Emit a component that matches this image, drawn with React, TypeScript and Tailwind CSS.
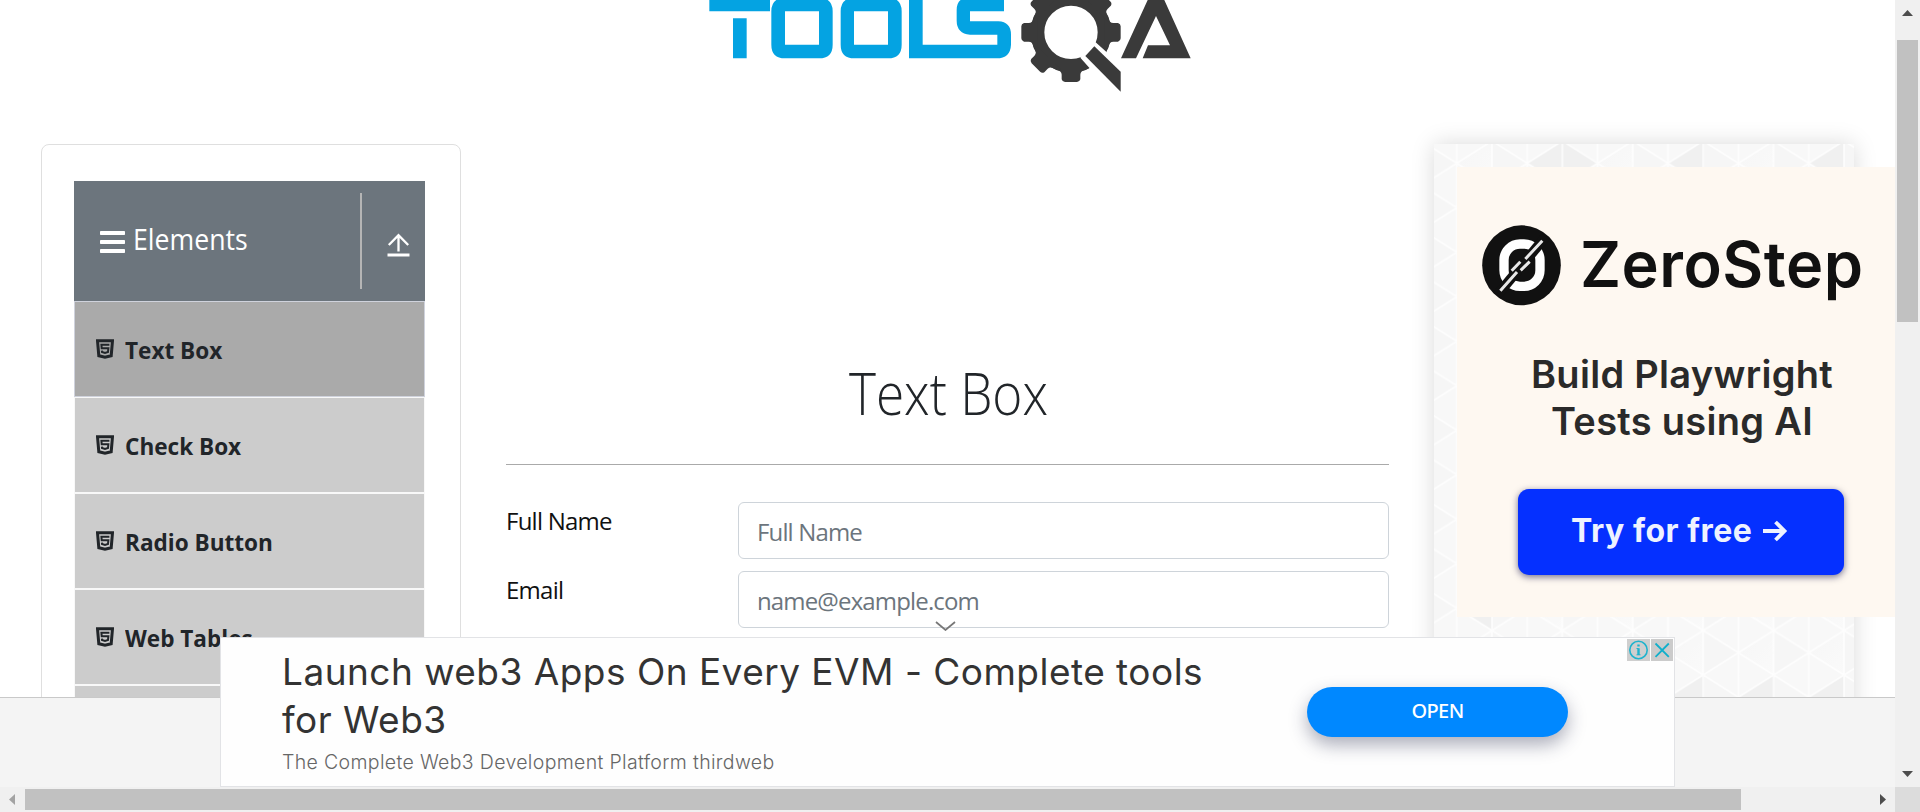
import React from "react";

function ToolsQaLogo() {
  return (
    <svg className="ml-[690px] block h-[110px] w-[520px]" viewBox="0 0 1560 330" aria-label="TOOLSQA">
      <g fill="#04a3e2" fillRule="evenodd">
        <path d="M58 -20H240V34H58ZM129 55H170V175H129Z" />
        <path d="M283 -7H389Q428 -5 428 34V134Q428 175 387 175H285Q244 175 244 134V34Q244 -5 283 -7ZM285 34V134H387V34Z" />
        <path d="M491 -7H597Q635 -5 635 34V134Q635 175 594 175H493Q452 175 452 134V34Q452 -5 491 -7ZM492 34V134H594V34Z" />
        <path d="M657 -20H698V134H922V104H840Q800 100 800 62V30Q800 -8 840 -8H942V34H840V64H925Q963 66 963 104V134Q961 175 920 175H657Z" />
      </g>
      <g fill="#3a3a3a">
        <circle cx="1143" cy="97" r="100.5" fill="none" stroke="#3a3a3a" strokeWidth="41" />
        {[0, 45, 90, 135, 180, 225, 315].map((a) => (
          <path
            key={a}
            transform={`rotate(${a} 1143 97)`}
            d="M1244 40L1255 53Q1258 69 1270 69H1284Q1292 71 1292 79V115Q1292 123 1284 125H1270Q1258 125 1255 141L1244 154Z"
          />
        ))}
        <path fill="#fff" d="M1216 126L1262 167L1330 220V320L1250 262L1171 173Z" />
        <path d="M1213 139L1292 215V275L1186 168Z" />
        <path d="M1293 175L1374 -2Q1380 -14 1398 -14Q1416 -14 1422 -2L1502 175H1358L1374 136H1440L1398 48L1338 175Z" />
      </g>
    </svg>
  );
}

function Html5Icon() {
  return (
    <svg className="h-5 w-[18px] shrink-0" viewBox="0 0 18 20" fill="none" stroke="#212529">
      <path strokeWidth="3" d="M1.5 1.7H16.5L15.2 16.7L9 18.3L2.8 16.7Z" />
      <path strokeWidth="2" d="M13.4 5.8H5.4L5.7 9.2H12.4L12 13L9 14L6 13L5.9 11.7" />
    </svg>
  );
}

function MenuItem({ label, active = false }: { label?: string; active?: boolean }) {
  return (
    <li
      className={
        active
          ? "flex h-24 shrink-0 items-center border border-[#cfd2dc] bg-[#aaaaaa] pl-[21px]"
          : "flex h-24 shrink-0 items-center border border-[#f8f8f8] bg-[#cccccc] pl-[21px]"
      }
    >
      <Html5Icon />
      <span className="ml-[10.5px] origin-left scale-x-[0.94] pt-px text-2xl font-bold whitespace-nowrap">{label}</span>
    </li>
  );
}

function Sidebar() {
  return (
    <aside className="h-[700px] w-[420px] shrink-0 rounded-t-lg border border-[#dfdfdf] px-8 pt-9">
      <div className="flex h-[120px] w-[351px] items-center bg-[#6c757d] text-white">
        <svg className="ml-[26px] h-6 w-[25px] translate-y-px" viewBox="0 0 25 24" fill="#fff">
          <rect y="1" width="25" height="4" rx="0.7" />
          <rect y="10" width="25" height="4" rx="0.7" />
          <rect y="19" width="25" height="4" rx="0.7" />
        </svg>
        <span className="ml-2 w-[153px] origin-left scale-x-[0.92] pb-[5px] text-[29px] leading-none">Elements</span>
        <div className="ml-auto h-24 w-[2px] bg-[#b5b5b5]" />
        <svg className="mr-[15px] ml-[25px] h-6 w-[23px] translate-y-1" viewBox="0 0 23 24" fill="none" stroke="#fff">
          <path strokeWidth="2.3" d="M11.5 18.5V2M1.8 12L11.5 2.2L21.2 12" />
          <path strokeWidth="3" d="M.5 22H22.5" />
        </svg>
      </div>
      <ul className="flex w-[351px] flex-col">
        <MenuItem label="Text Box" active />
        <MenuItem label="Check Box" />
        <MenuItem label="Radio Button" />
        <MenuItem label="Web Tables" />
        <MenuItem />
      </ul>
    </aside>
  );
}

function Field({ label, placeholder }: { label: string; placeholder: string }) {
  return (
    <div className="flex h-[57px] items-start text-2xl">
      <label className="w-[232px] pt-px leading-9 tracking-[-0.75px] text-[#111]">{label}</label>
      <input
        className="h-[57px] w-[651px] rounded-md border border-[#ced4da] bg-white pt-px pl-[18px] tracking-[-0.85px] placeholder:text-[#6c757d] placeholder:opacity-100"
        placeholder={placeholder}
      />
    </div>
  );
}

function TextBoxForm() {
  return (
    <main className="ml-[45px] w-[883px] shrink-0 pt-[212px]">
      <h1 className="translate-x-px scale-x-[0.87] text-center text-[59px] leading-[72px] font-light">Text Box</h1>
      <hr className="mt-9 border-0 border-t border-t-[#aaa]" />
      <form className="mt-[37px] flex flex-col gap-3">
        <Field label="Full Name" placeholder="Full Name" />
        <Field label="Email" placeholder="name@example.com" />
      </form>
    </main>
  );
}

const DARK_TRIANGLES = [
  "94,19 129,-3 129,41",
  "129,-3 164,19 129,41",
  "234,19 270,-3 270,41",
  "375,19 410,-3 410,41",
  "23,464 58,442 58,486",
  "305,553 340,531 340,575",
  "234,553 270,531 270,575",
  "375,553 410,531 410,575",
];

function TriangleBackdrop() {
  return (
    <svg className="absolute inset-0 h-full w-full">
      <defs>
        <linearGradient id="facet" x2="1" y2="1">
          <stop offset="0" stopColor="#f6f6f6" />
          <stop offset="1" stopColor="#fafafa" />
        </linearGradient>
        <pattern id="tri" x="58" y="-3" width="70.4" height="44.5" patternUnits="userSpaceOnUse">
          <path fill="#f6f6f6" d="M0 0L35.2 22.25L0 44.5Z" />
          <path fill="url(#facet)" d="M35.2 22.25L70.4 0V44.5Z" />
        </pattern>
        <pattern id="lines" x="58" y="-3" width="70.4" height="44.5" patternUnits="userSpaceOnUse">
          <path
            fill="none"
            stroke="#fff"
            strokeWidth="1.6"
            strokeOpacity="0.8"
            d="M0 0V44.5M70.4 0V44.5M35.2 0V44.5M0 0L70.4 44.5M0 44.5L70.4 0"
          />
        </pattern>
      </defs>
      <rect width="100%" height="100%" fill="#f8f8f8" />
      <rect width="100%" height="100%" fill="url(#tri)" />
      {DARK_TRIANGLES.map((p) => (
        <polygon key={p} points={p} fill="#f0f0f0" />
      ))}
      <rect width="100%" height="100%" fill="url(#lines)" />
    </svg>
  );
}

function ZeroStepMark() {
  return (
    <svg className="h-[81px] w-[79px] translate-y-px" viewBox="187 283 237 243">
      <ellipse cx="305.5" cy="404" rx="118" ry="120" fill="#111" />
      <rect x="253" y="340" width="108" height="127" rx="48" fill="none" stroke="#fff" strokeWidth="28" />
      <path stroke="#111" strokeWidth="30" d="M378 318L232 494" />
      <path stroke="#e8e8e8" strokeWidth="9" d="M368 330L317 385M302 393L276 420M330 393L303 419M292 424L242 480" />
    </svg>
  );
}

function SideAd() {
  return (
    <aside className="relative ml-[45px] h-[700px] w-[420px] shrink-0 pt-[23px] pl-[23px] shadow-[0_0_22px_rgba(0,0,0,0.15)]">
      <TriangleBackdrop />
      <div className="relative flex h-[450px] w-[450px] flex-col items-center bg-[#fef8f1] pt-[57px] font-[Inter,sans-serif] text-[#111]">
        <div className="flex h-20 w-full items-center pl-[25px]">
          <ZeroStepMark />
          <span className="ml-[19px] text-[63px] leading-[80px] font-semibold tracking-[0.5px]">ZeroStep</span>
        </div>
        <p className="mt-[47px] text-center text-[38px] leading-[47px] font-semibold tracking-[0.3px] text-[#2a2a2a]">
          Build Playwright
          <br />
          Tests using AI
        </p>
        <button className="mt-11 -ml-0.5 flex h-[86px] w-[326px] shrink-0 items-center rounded-[11px] bg-[#0530ff] pb-[3px] pl-[53px] text-[32px] font-bold tracking-[0.5px] text-[#eef2ff] shadow-[0_2px_7px_rgba(0,0,60,0.55)]">
          Try for free
          <svg className="ml-[10px] h-6 w-[26px]" viewBox="0 0 26 24" fill="none" stroke="#eef2ff" strokeWidth="3.8">
            <path d="M1 12H23M13.5 3L22.5 12L13.5 21" />
          </svg>
        </button>
      </div>
    </aside>
  );
}

function BannerAd() {
  return (
    <section className="absolute top-[637px] left-[220px] flex h-[150px] w-[1455px] border border-[#e2e3e6] bg-[#fefefe] font-[Inter,sans-serif]">
      <div className="w-[1086px] pt-[10px] pl-[61px]">
        <h2 className="text-[37px] leading-[48px] tracking-[0.48px] text-[#333]">
          Launch web3 Apps On Every EVM - Complete tools
          <br />
          for Web3
        </h2>
        <p className="mt-1 text-[19.5px] leading-7 font-light tracking-[0.34px] text-[#666]">
          The Complete Web3 Development Platform thirdweb
        </p>
      </div>
      <button className="mt-[49px] h-[50px] w-[261px] rounded-full bg-[#0088ff] pb-0.5 font-['Noto_Sans',sans-serif] text-[20px] font-medium tracking-[-0.6px] text-white shadow-[0_8px_18px_rgba(40,45,80,0.38)]">
        OPEN
      </button>
      <div className="mt-px ml-auto flex h-[22px] gap-px pr-px">
        <svg className="h-[22px] w-[23px] bg-[#cfcfcf]" viewBox="0 0 23 22" fill="none" stroke="#1fb3cd">
          <circle cx="11.5" cy="11" r="8.7" strokeWidth="1.6" />
          <path strokeWidth="2.4" d="M11.5 5.4V7.6M11.5 9.2V16" />
          <path strokeWidth="1" d="M9.5 9.5H11.5M9.5 15.8H13.5" />
        </svg>
        <svg className="h-[22px] w-[22px] bg-[#cbcbcb]" viewBox="0 0 22 22" fill="none" stroke="#10afcb" strokeWidth="1.8">
          <path d="M4.5 4.5L17.8 17.8M17.8 4.5L4.5 17.8" />
        </svg>
      </div>
    </section>
  );
}

export default function App() {
  return (
    <div className="flex h-[812px] w-[1920px] flex-col overflow-hidden bg-white font-['Open_Sans',sans-serif] text-[#212529]">
      <div className="flex h-[787px]">
        <div className="relative flex h-[787px] w-[1895px] flex-col overflow-hidden">
          <div className="h-[697px] shrink-0 overflow-hidden">
            <header className="h-36">
              <ToolsQaLogo />
            </header>
            <div className="flex pl-[41px]">
              <Sidebar />
              <TextBoxForm />
              <SideAd />
            </div>
          </div>
          <footer className="h-[90px] shrink-0 border-t border-[#c9c9c9] bg-[#f4f4f4]" />
          <svg
            className="absolute top-[621px] left-[935px] h-[10px] w-[21px]"
            viewBox="0 0 21 10"
            fill="none"
            stroke="#777"
            strokeWidth="1.7"
          >
            <path d="M1 1L10.5 9L20 1" />
          </svg>
          <BannerAd />
        </div>
        <div className="flex w-[25px] flex-col items-center bg-[#f0f0f0]">
          <svg className="mt-[10px] h-[6px] w-[11px]" viewBox="0 0 11 6" fill="#4d4d4d">
            <path d="M0 6L5.5 0L11 6Z" />
          </svg>
          <div className="mt-6 h-[282px] w-[21px] bg-[#c1c1c1]" />
          <svg className="mt-auto mb-[10px] h-[6px] w-[11px]" viewBox="0 0 11 6" fill="#4d4d4d">
            <path d="M0 0L5.5 6L11 0Z" />
          </svg>
        </div>
      </div>
      <div className="flex h-[25px] items-center bg-[#f0f0f0]">
        <svg className="ml-[9px] h-[11px] w-[6px]" viewBox="0 0 6 11" fill="#a3a3a3">
          <path d="M6 0L0 5.5L6 11Z" />
        </svg>
        <div className="ml-[10px] h-[21px] w-[1716px] bg-[#c1c1c1]" />
        <svg className="ml-auto h-[11px] w-[6px]" viewBox="0 0 6 11" fill="#4d4d4d">
          <path d="M0 0L6 5.5L0 11Z" />
        </svg>
        <div className="ml-[9px] h-[25px] w-[25px] bg-[#dcdcdc]" />
      </div>
    </div>
  );
}
